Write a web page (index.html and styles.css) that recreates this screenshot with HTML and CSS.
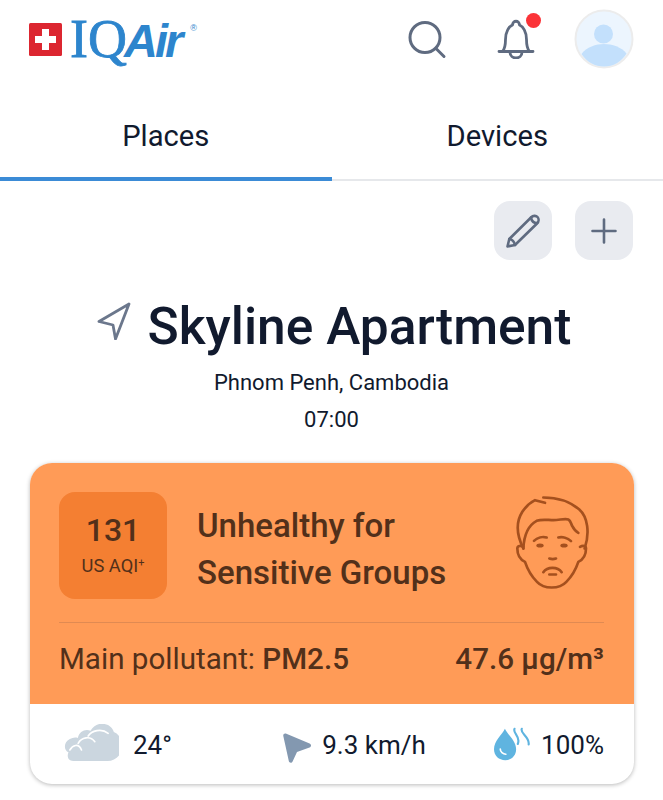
FILE: index.html
```html
<!DOCTYPE html>
<html lang="en">
<head>
<meta charset="utf-8">
<title>IQAir</title>
<link rel="stylesheet" href="styles.css">
</head>
<body>
<header class="topbar">
  <div class="logo">
    <svg class="flag" viewBox="0 0 33 33" width="33" height="33"><rect width="33" height="33" rx="1.5" fill="#dc2630"/><path d="M13 6h7v7h7v7h-7v7h-7v-7H6v-7h7z" fill="#fff"/></svg>
    <div class="wordmark"><span class="logo-iq">IQ</span><span class="logo-air">Air</span><span class="logo-r">®</span></div>
  </div>
  <div class="top-actions">
    <svg class="ic-search" viewBox="0 0 40 40" width="40" height="40" fill="none" stroke="#5f6b80" stroke-width="3" stroke-linecap="round"><circle cx="18" cy="17.500" r="15"/><path d="M29 28.500l8 8"/></svg>
    <span class="bell">
      <svg viewBox="0 0 40 44" width="40" height="44" fill="none" stroke="#5f6b80" stroke-width="2.800" stroke-linecap="round" stroke-linejoin="round"><path d="M3 36.500h34M6.500 36.500c2.500-3 3-6 3-12 0-8 3.500-13 7-14.500 0-5 7-5 7 0 3.500 1.500 7 6.500 7 14.500 0 6 .5 9 3 12"/><path d="M14 37c0 8 12 8 12 0"/></svg>
      <i class="dot"></i>
    </span>
    <svg class="avatar" viewBox="0 0 60 60" width="60" height="60"><circle cx="30" cy="30" r="28.500" fill="#ecf5fe" stroke="#ececec" stroke-width="2"/><circle cx="29.500" cy="25" r="9.500" fill="#c3e0fc"/><path d="M7.500 45c5-7 14.500-10 22.500-10s17.500 3 22.500 9.500C47.500 53 39 57.500 30 57.500S12.500 53 7.500 45z" fill="#c3e0fc"/></svg>
  </div>
</header>
<nav class="tabs">
  <div class="tab active">Places</div>
  <div class="tab">Devices</div>
</nav>
<main class="content">
  <div class="tools">
    <button class="tool" type="button" aria-label="Edit">
      <svg viewBox="0 0 36 36" width="36" height="36" fill="none" stroke="#5f6b80" stroke-width="2.600" stroke-linejoin="round" stroke-linecap="round"><path d="M2.500 33.500l1.800-7.500L26 4.500c2-2 5-2.200 6.500-.5s1.500 4.500-.5 6.500L10 32z"/><path d="M26 4.500c.5 3 2.500 5.500 6 5.500M4.300 26c2.500.5 5 3 5.700 6"/></svg>
    </button>
    <button class="tool" type="button" aria-label="Add">
      <svg viewBox="0 0 26 26" width="26" height="26" fill="none" stroke="#5f6b80" stroke-width="2.600" stroke-linecap="round"><path d="M13 1.500v23M1.500 13h23"/></svg>
    </button>
  </div>
  <div class="place">
    <div class="place-title">
      <svg viewBox="0 0 34 38" width="34" height="38" fill="none" stroke="#6b778c" stroke-width="2.800" stroke-linejoin="round"><path d="M32 2L2 19.500l14 3.500 2.500 14z"/></svg>
      <h1>Skyline Apartment</h1>
    </div>
    <p class="city">Phnom Penh, Cambodia</p>
    <p class="time">07:00</p>
  </div>
  <section class="card">
    <div class="aqi-panel">
      <div class="aqi-top">
        <div class="aqi-box">
          <div class="aqi-num">131</div>
          <div class="aqi-unit">US AQI<sup>+</sup></div>
        </div>
        <div class="aqi-label">Unhealthy for<br>Sensitive Groups</div>
        <svg class="face" viewBox="75 45 228 284" width="76" height="95" fill="none" stroke="#a5501e" stroke-width="8" stroke-linecap="round" stroke-linejoin="round">
          <path d="M100 205C80 165 78 125 97 95c12-18 28-30 38-35l30 8"/>
          <path d="M160 52c30 0 75 8 108 36 25 22 32 70 16 117"/>
          <path d="M100 205c2-40 12-68 40-83 16-6 34-2 50-2 18 0 36-6 45-2 8 4 8 14 12 20 4 8 10 16 18 20"/>
          <path d="M100 200c-8-5-18-3-18 5 0 14 6 32 23 40 8 24 20 44 36 60 10 11 20 17 44 17s34-6 44-17c16-16 28-36 36-60 17-8 23-26 23-40 0-8-9-10-18-5"/>
          <path d="M132 182c10-10 26-14 38-10M243 183c-10-10-26-14-38-11"/>
          <path d="M178 235c6 2 14 2 20 0M160 276c12-17 43-17 55 0M178 283h20"/>
          <ellipse cx="150" cy="196" rx="11" ry="6" fill="#a5501e" stroke="none"/>
          <ellipse cx="222" cy="196" rx="11" ry="6" fill="#a5501e" stroke="none"/>
        </svg>
      </div>
      <div class="pollutant">
        <span>Main pollutant: <span class="pm">PM2.5</span></span>
        <span class="conc">47.6 µg/m³</span>
      </div>
    </div>
    <div class="weather">
      <div class="w-item">
        <svg class="ic-cloud" viewBox="133 72 164 111" width="55" height="37"><path d="M160 183c-14 0-20-12-14-26-14-6-16-30 4-40 8-4 16-6 24-3 4-20 22-28 38-22 8-14 24-24 42-20 16 3 24 12 28 24 14 6 25 20 25 42 0 26-20 45-44 45z" fill="#cbd6df"/><path d="M150 150c8-14 26-22 35 0M175 130c10-18 36-24 50-5M205 108c10-16 40-24 60-8" fill="none" stroke="#fff" stroke-width="5" stroke-linecap="round"/></svg>
        <span>24°</span>
      </div>
      <div class="w-item w-wind">
        <svg class="ic-wind" viewBox="0 0 28 30" width="28" height="30"><path d="M2.800.5C1 .2 0 1.300.3 3l5.500 25c.4 2 3 2.300 3.800.4l4.400-9.500 12.500-4.400c2-.8 2-3.200.1-4z" fill="#8398b0"/></svg>
        <span>9.3 km/h</span>
      </div>
      <div class="w-item w-hum">
        <svg class="ic-drop" viewBox="103 80 109 102" width="36" height="34" fill="none"><path d="M136 85c-8 18-33 36-33 62 0 20 15 33 34 33s33-14 33-33c0-26-26-44-34-62z" fill="#5fb4e0"/><path d="M122 146c0 9 8 16 17 16" stroke="#fff" stroke-width="5" stroke-linecap="round"/><path d="M165 85c-6 14 20 22 10 46M187 85c-6 14 24 24 21 47" stroke="#5fb4e0" stroke-width="6.500" stroke-linecap="round"/></svg>
        <span>100%</span>
      </div>
    </div>
  </section>
</main>
</body>
</html>
```
FILE: styles.css
```css
* { box-sizing: border-box; }
html, body { margin: 0; padding: 0; }
body {
  width: 663px;
  height: 800px;
  overflow: hidden;
  background: #fff;
  color: #111a2e;
  font-family: Roboto, "Liberation Sans", sans-serif;
}
.topbar {
  height: 78px;
  padding: 9px 29px 0 29px;
  display: flex;
  justify-content: space-between;
  align-items: flex-start;
}
.logo {
  display: flex;
  align-items: flex-start;
  padding-top: 14px;
  color: #2d85cd;
}
.flag { flex: none; display: block; }
.wordmark {
  display: flex;
  align-items: baseline;
  margin-left: 8px;
  height: 33px;
  line-height: 33px;
  white-space: nowrap;
}
.logo-iq {
  font-family: "Liberation Serif", serif;
  font-size: 54px;
  letter-spacing: 0;
  -webkit-text-stroke: .8px #2d85cd;
}
.logo-air {
  font-family: "Liberation Sans", sans-serif;
  font-weight: 700;
  font-style: italic;
  font-size: 47px;
  letter-spacing: -3px;
  margin-left: -3px;
}
.logo-r {
  font-family: "Liberation Sans", sans-serif;
  font-size: 9px;
  align-self: flex-start;
  margin-left: 10px;
  line-height: 10px;
  margin-top: 0;
}
.top-actions { display: flex; align-items: center; }
.ic-search { margin-right: 49px; margin-top: 2px; }
.bell { position: relative; display: block; width: 40px; height: 44px; margin-right: 38px; margin-bottom: 4px; }
.bell svg { display: block; }
.dot {
  position: absolute;
  top: -2px;
  left: 30px;
  width: 15px;
  height: 15px;
  border-radius: 50%;
  background: #fb3338;
}
.avatar { display: block; }
.tabs {
  display: flex;
  height: 103px;
  border-bottom: 2px solid #e6e8eb;
}
.tab {
  width: 50%;
  text-align: center;
  font-size: 29.200px;
  line-height: 34px;
  padding-top: 41px;
  color: #111a2e;
}
.tab.active {
  border-bottom: 4px solid #3b8bd6;
  height: 103px;
}
.content { padding: 20px 29.500px 0; }
.tools { display: flex; justify-content: flex-end; gap: 23px; margin-right: .5px; }
.tool {
  width: 58px;
  height: 59px;
  border: 0;
  padding: 0;
  border-radius: 16px;
  background: #e9ebf0;
  display: flex;
  align-items: center;
  justify-content: center;
}
.place { text-align: center; margin-top: 30px; }
.place-title { display: flex; justify-content: center; align-items: center; gap: 17px; padding-left: 5px; }
.place-title svg { margin-bottom: 12px; }
h1 {
  margin: 0;
  font-size: 51.500px;
  line-height: 74px;
  font-weight: 500;
  color: #111a2e;
}
.city { margin: 4px 0 0; font-size: 22px; line-height: 30px; }
.time { margin: 7px 0 0; font-size: 22px; line-height: 30px; }
.card {
  margin-top: 28px;
  border-radius: 22px;
  overflow: hidden;
  background: #fff;
  box-shadow: 0 1px 4px rgba(0, 0, 0, .28);
  height: 321px;
}
.aqi-panel {
  height: 241px;
  background: #ff9b57;
  padding: 29px 29.500px 0;
  color: #52301a;
}
.aqi-top { display: flex; align-items: center; height: 131px; padding-bottom: 23px; border-bottom: 1px solid #e08a52; }
.aqi-box {
  width: 108px;
  height: 107px;
  flex: none;
  border-radius: 16px;
  background: #f47f32;
  text-align: center;
  padding-top: 19px;
}
.aqi-num { font-size: 32px; line-height: 39px; font-weight: 500; }
.aqi-unit { font-size: 18.300px; line-height: 22px; margin-top: 5px; }
.aqi-unit sup { font-size: 11px; line-height: 0; vertical-align: 6px; }
.aqi-label {
  flex: 1;
  margin-left: 30px;
  padding-top: 6px;
  font-size: 33px;
  line-height: 47px;
  font-weight: 500;
  white-space: nowrap;
}
.face { flex: none; margin: 3px 13px 0 0; align-self: flex-start; }
.pollutant {
  display: flex;
  justify-content: space-between;
  align-items: center;
  font-size: 29.600px;
  line-height: 36px;
  padding-top: 18px;
}
.pm { font-weight: 500; }
.conc { font-weight: 500; }
.weather {
  height: 80px;
  display: flex;
  align-items: center;
  justify-content: space-between;
  padding: 2px 29.500px 0 34.500px;
  font-size: 26px;
  color: #111a2e;
}
.w-item { display: flex; align-items: center; gap: 14px; }
.w-item svg { display: block; }
.w-wind { margin-left: 43px; gap: 11px; }
.w-hum { gap: 11px; }
.ic-cloud { margin-bottom: 5px; }
.ic-wind { margin-top: 5px; }
.ic-drop { margin-bottom: 3px; }
```
